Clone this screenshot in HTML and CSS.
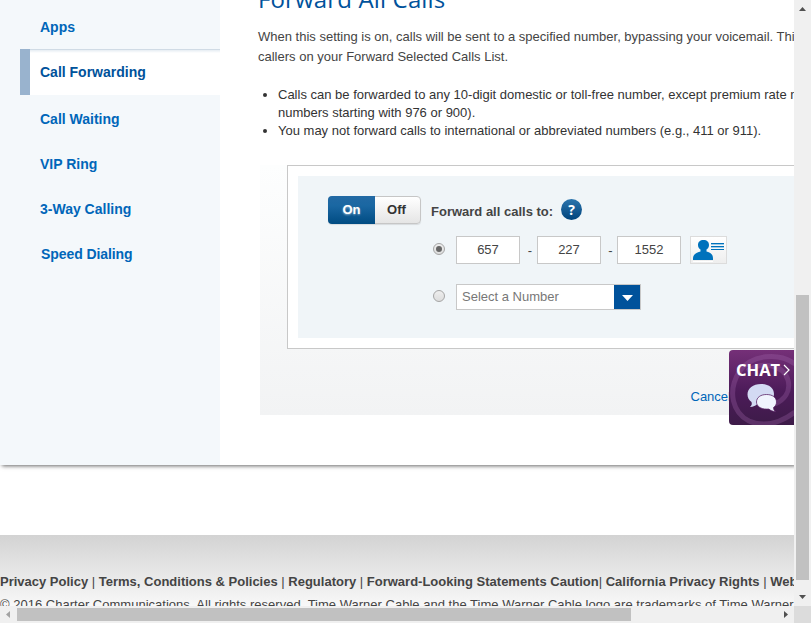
FILE: index.html
```
<!DOCTYPE html>
<html lang="en">
<head>
<meta charset="utf-8">
<title>Call Forwarding</title>
<link rel="stylesheet" href="styles.css">
</head>
<body>
<div class="window">
  <div class="viewport">
    <div class="page">
      <nav class="side">
        <a class="item apps">Apps</a>
        <a class="item active">Call Forwarding</a>
        <a class="item waiting">Call Waiting</a>
        <a class="item vip">VIP Ring</a>
        <a class="item way">3-Way Calling</a>
        <a class="item speed">Speed Dialing</a>
      </nav>
      <main class="content">
        <h1>Forward All Calls</h1>
        <p class="intro">When this setting is on, calls will be sent to a specified number, bypassing your voicemail. This<br>callers on your Forward Selected Calls List.</p>
        <ul class="notes">
          <li>Calls can be forwarded to any 10-digit domestic or toll-free number, except premium rate n<br>numbers starting with 976 or 900).</li>
          <li>You may not forward calls to international or abbreviated numbers (e.g., 411 or 911).</li>
        </ul>
        <section class="panel">
          <div class="box">
            <div class="form">
              <div class="toggle"><span class="on">On</span><span class="off">Off</span></div>
              <div class="fields">
                <div class="label"><b>Forward all calls to:</b><span class="help">?</span></div>
                <div class="row">
                  <span class="radio checked"></span>
                  <span class="num">657</span><span class="dash">-</span><span class="num">227</span><span class="dash narrow">-</span><span class="num">1552</span>
                  <span class="contact"><svg width="35" height="26" viewBox="0 0 35 26"><path fill="#fff" d="M2 24h20v1H2z"/><path fill="#0072bc" d="M2 23v-1.500c0-4 3-6 7.500-7v-2C8 11.500 7 10 7 8c0-3 2-5 5.500-5s5.500 2 5.500 5c0 2-1 3.500-2.500 4.500v2c4.500 1 6.500 3 6.500 7V23z"/><path fill="#9cc9e6" d="M20 6h13v7H20z"/><path stroke="#0072bc" d="M20 6.500h13M20 9.500h13M20 12.500h13"/><path stroke="#f5f7f8" d="M20 8.500h13M20 11.500h13"/></svg></span>
                </div>
                <div class="row second">
                  <span class="radio"></span>
                  <div class="select"><span>Select a Number</span><i><svg width="11" height="6" viewBox="0 0 11 6"><path d="M0 0h11L5.500 6z" fill="#fff"/></svg></i></div>
                </div>
              </div>
            </div>
          </div>
          <a class="cancel">Cancel</a>
        </section>
      </main>
    </div>
    <footer class="footer">
      <div class="links"><b>Privacy Policy</b> | <b>Terms, Conditions &amp; Policies</b> | <b>Regulatory</b> | <b>Forward-Looking Statements Caution</b>| <b>California Privacy Rights</b> | <b>Web</b></div>
      <div class="legal">© 2016 Charter Communications. All rights reserved. Time Warner Cable and the Time Warner Cable logo are trademarks of Time Warner</div>
    </footer>
    <div class="chat">
      <svg class="swirl" width="65" height="75" viewBox="0 0 65 75"><g fill="none" stroke="#a66bae" stroke-opacity=".3" stroke-width="5"><path d="M66 14C50 2 22 4 10 22C-2 42 4 63 20 71c14 6 30 3 46-9"/><path d="M18 21c14-10 36-7 41 9 3 12-4 20-13 24"/></g></svg>
      <div class="chat-title">CHAT<svg width="8" height="12" viewBox="0 0 8 12"><path d="M1 1l5 5-5 5" fill="none" stroke="#fff" stroke-width="1.200"/></svg></div>
      <svg class="bubbles" width="30" height="28" viewBox="0 0 30 28"><path fill="#d3daf3" d="M14 0c8 0 13 4 13 10 0 5-5 10-13 10l-3-.4C9 22 6 23 3 23c2-2 2-3 1.500-5C2 16 .5 13.500.5 10.500.5 4.500 6 0 14 0z"/><path fill="#f0f3fd" stroke="#5b2467" stroke-width=".8" d="M19.500 10.500c6 0 10 3 10 7.500 0 2.500-1 4-3 5.500 0 1.500.5 3 2 4-3 0-5-1-6.500-2.400h-2.500c-6 0-10-3-10-7.100 0-4.500 4-7.500 10-7.500z"/></svg>
    </div>
  </div>
  <div class="vbar"><svg class="up" width="7" height="4" viewBox="0 0 7 4"><path d="M0 4h7L3.500 0z"/></svg><div class="vthumb"></div><svg class="down" width="7" height="4" viewBox="0 0 7 4"><path d="M0 0h7L3.500 4z"/></svg></div>
  <div class="hbar"><svg class="left" width="4" height="7" viewBox="0 0 4 7"><path d="M4 0v7L0 3.500z"/></svg><div class="hthumb"></div><svg class="right" width="4" height="7" viewBox="0 0 4 7"><path d="M0 0v7l4-3.500z"/></svg></div>
  <div class="corner"></div>
</div>
</body>
</html>
```
FILE: styles.css
```
* { box-sizing: border-box; }
body { margin: 0; overflow: hidden; background: #fff; color: #444; font: 13px "Liberation Sans", Arial, sans-serif; }
.window { display: grid; grid-template: 606px 17px / 794px 17px; width: 811px; height: 623px; }
.viewport { position: relative; overflow: hidden; }
.page { display: flex; height: 465px; background: #fff; box-shadow: 2px 1px 4px rgba(0,0,0,.6); }
.side { width: 220px; flex: none; padding: 4px 0 0 20px; background: #f4f8fb; }
.item { display: block; height: 45px; padding-left: 20px; line-height: 46px; font-size: 14px; font-weight: bold; color: #0066b9; }
.item.active { height: 46px; padding-left: 10px; border-left: 10px solid #99b3ce; margin-bottom: 1px; background: linear-gradient(#d0dbe5 1px, #e6edf3 1px, #fff 4px); background-clip: padding-box; color: #00529b; }
.item.speed { padding-left: 21px; letter-spacing: -.08px; }
.content { flex: 1; min-width: 0; padding-left: 38px; white-space: nowrap; }
h1 { margin: -18px 0 19px; height: 26px; font: 500 24px/33px "Open Sans", sans-serif; letter-spacing: .15px; color: #00529b; }
.intro { margin: 0; line-height: 20px; }
.notes { margin: 19px 0 25px; padding-left: 20px; line-height: 18px; color: #333; }
.panel { height: 250px; margin-left: 2px; padding-left: 27px; background: linear-gradient(#fdfefe, #f2f3f4); }
.box { height: 184px; width: 560px; padding: 10px; border: 1px solid #c8c8c8; background: #fff; }
.form { display: flex; height: 162px; background: #f0f5f8; padding: 20px 30px; }
.toggle { display: flex; width: 93px; height: 28px; border: 1px solid #c6c6c6; border-radius: 4px; font-weight: bold; line-height: 26px; text-align: center; color: #333; background: linear-gradient(#fff, #e5e5e5); box-shadow: 0 1px 1px rgba(0,0,0,.1); }
.on { width: 47px; margin: -1px 0 -1px -1px; line-height: 28px; border-radius: 4px 0 0 4px; background: linear-gradient(#2269a4, #1a67a2 35%, #004b82); color: #fff; text-shadow: 0 1px 2px rgba(255,255,255,.5); }
.off { flex: 1; padding-right: 2px; }
.fields { margin-left: 10px; }
.label { display: flex; height: 30px; line-height: 31px; }
.help { width: 21px; height: 21px; margin: 3px 0 0 8px; border-radius: 50%; background: linear-gradient(#2c75ad, #00437c); color: #fff; font: bold 14px/21px "Open Sans", sans-serif; text-align: center; }
.row { display: flex; align-items: center; height: 28px; margin-top: 10px; padding-left: 2px; }
.row.second { height: 26px; margin-top: 20px; }
.radio { display: flex; width: 12px; height: 12px; margin-right: 11px; border: 1px solid #a5a5a5; border-radius: 50%; background: linear-gradient(#eee, #ddd); position: relative; top: -1px; }
.checked::after { content: ""; width: 6px; height: 6px; margin: 2px; border-radius: 50%; background: #666; }
.num { width: 64px; height: 28px; border: 1px solid #c8c8c8; background: #fff; line-height: 26px; text-align: center; }
.dash { width: 17px; padding-left: 3px; text-align: center; }
.dash.narrow { width: 16px; }
.contact { width: 37px; height: 28px; margin-left: 9px; border: 1px solid #dcdcdc; background: linear-gradient(#fff, #eee); }
.contact svg { display: block; }
.select { display: flex; width: 185px; height: 26px; border: 1px solid #c8c8c8; background: #fff; line-height: 24px; color: #777; }
.select span { flex: 1; padding-left: 5px; }
.select i { width: 26px; padding-top: 2px; display: grid; place-items: center; background: #00529b; }
.cancel { display: block; margin: 39px 0 0 403.500px; line-height: 18px; color: #0066b9; }
.footer { height: 71px; margin-top: 70px; background: linear-gradient(#d3d3d3, #f8f8f8); white-space: nowrap; }
.links { padding-top: 38px; line-height: 17px; }
.legal { line-height: 17px; margin-top: 6px; letter-spacing: .012px; }
.chat { position: absolute; left: 729px; top: 350px; width: 70px; height: 75px; overflow: hidden; border-radius: 4px; background: linear-gradient(#753078, #4c1b59 55%, #3d1b48); color: #fff; }
.swirl { position: absolute; left: 0; top: 0; }
.chat-title { position: relative; display: flex; align-items: center; gap: 3px; padding: 10px 0 0 7px; font: bold 16.500px/20px "Open Sans", sans-serif; }
.bubbles { position: relative; display: block; margin: 4px 0 0 18px; }
.vbar { display: flex; flex-direction: column; align-items: center; background: #f0f0f0; fill: #505050; }
.up { margin-top: 7px; }
.vthumb { width: 13px; height: 285px; margin: 284px 0 15px; background: #c1c1c1; }
.hbar { display: flex; align-items: center; background: #f0f0f0; fill: #505050; }
.left { margin-left: 6px; fill: #a3a3a3; }
.hthumb { width: 614px; height: 13px; margin: 0 153px 0 7px; background: #c1c1c1; }
.corner { background: #dcdcdc; }
```
